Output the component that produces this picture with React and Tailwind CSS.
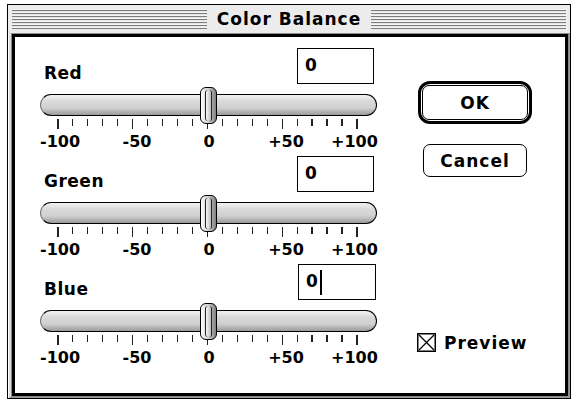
import React from "react";

const stripes =
  "h-[20px] flex-1 bg-[repeating-linear-gradient(to_bottom,#f4f4f4_0px,#f4f4f4_1px,#7c7c7c_1px,#7c7c7c_2.5px,#e6e6e6_2.5px,#e6e6e6_3px)]";

const Slider = ({ label, focused }) => (
  <div className="flex flex-col">
    <div className="flex items-end h-[36px]">
      <span className="mb-[3px] ml-[4px] text-[17px] leading-[16px] tracking-[0.5px]">{label}</span>
      <div
        className={
          "ml-auto h-[36px] border border-black bg-white pl-[7px] pt-[8px] text-[17px] leading-[16px] flex items-start " +
          (focused ? "w-[78px] mr-[1px]" : "w-[77px] mr-[3px]")
        }
      >
        <span>0</span>
        {focused && <span className="ml-[2px] -mt-[3px] inline-block w-[2px] h-[25px] bg-black" />}
      </div>
    </div>

    <div className="relative mt-[10px] h-[22px]">
      <div className="h-full rounded-[11px] border-y-[1.5px] border-x border-black border-l-[#777] bg-[linear-gradient(to_bottom,#f2f2f2,#dadada_30%,#d0d0d0_65%,#9a9a9a)]" />
      <div className="absolute left-[160px] top-[-7px] z-10 flex h-[37px] w-[17px] justify-center rounded-[6px] border-[1.5px] border-black bg-[linear-gradient(to_right,#ffffff,#d2d2d2_45%,#808080)]">
        <div className="my-[2px] w-[7px] rounded-[3px] border-x-[1.5px] border-[#222] bg-[linear-gradient(to_right,#f8f8f8,#bdbdbd)]" />
      </div>
    </div>

    <div className="mt-[3px] flex h-[10px] items-start justify-between pl-[17px] pr-[19px]">
      {Array.from({ length: 21 }, (_, i) => (
        <div key={i} className={(i % 5 === 0 ? "h-[10px]" : "h-[7px]") + " w-[1.5px] bg-[#222]"} />
      ))}
    </div>

    <div className="mt-[5px] flex h-[16px] text-[16px] leading-[16px]">
      <span className="w-[40px] text-center">-100</span>
      <span className="ml-[37px] w-[40px] text-center">-50</span>
      <span className="ml-[32px] w-[40px] text-center">0</span>
      <span className="ml-[37px] w-[40px] text-center">+50</span>
      <span className="ml-[25px] w-[40px] text-center">+100</span>
    </div>
  </div>
);

export default function App() {
  return (
    <div className="h-[403px] w-[576px] bg-white pl-[7px] pt-[4px] font-['DejaVu_Sans',sans-serif] font-bold text-black">
      <div className="flex h-[395px] w-[564px] flex-col border border-black bg-[#dcdcdc] shadow-[inset_1px_1px_0_#ffffff,inset_-1px_-1px_0_#9a9a9a]">
        {/* title bar */}
        <div className="flex h-[28px] items-center gap-[10px] bg-[#ececec] px-[4px]">
          <div className={stripes} />
          <span className="text-[17px] leading-[20px] tracking-[1px]">Color Balance</span>
          <div className={stripes} />
        </div>

        {/* content */}
        <div className="mb-[1px] ml-[3px] mr-[1px] flex-1 border border-[#8a8a8a]">
          <div className="flex h-full border-[3px] border-black bg-white">
            <div className="ml-[25px] flex w-[337px] flex-col gap-[6px] pt-[11px]">
              <Slider label="Red" />
              <Slider label="Green" />
              <Slider label="Blue" focused />
            </div>

            <div className="ml-[40px] flex w-[116px] flex-col items-center pb-[41px] pt-[44px]">
              <div className="rounded-[12px] border-[3.5px] border-black p-[1px]">
                <button className="flex h-[35px] w-[106px] items-center justify-center rounded-[7px] border border-black bg-white text-[17px] leading-[16px] tracking-[1px]">
                  OK
                </button>
              </div>
              <button className="mt-[20px] flex h-[33px] w-[104px] items-center justify-center rounded-[7px] border-[1.5px] border-black bg-white text-[17px] leading-[16px] tracking-[1px]">
                Cancel
              </button>

              <div className="mt-auto flex items-center gap-[8px] self-start">
                <svg width="19" height="19" viewBox="0 0 19 19">
                  <rect x="0.75" y="0.75" width="17.5" height="17.5" fill="white" stroke="black" strokeWidth="1.5" />
                  <path d="M2 2 L17 17 M17 2 L2 17" stroke="black" strokeWidth="1.3" />
                </svg>
                <span className="text-[17px] leading-[16px] tracking-[1px]">Preview</span>
              </div>
            </div>
          </div>
        </div>
      </div>
    </div>
  );
}
